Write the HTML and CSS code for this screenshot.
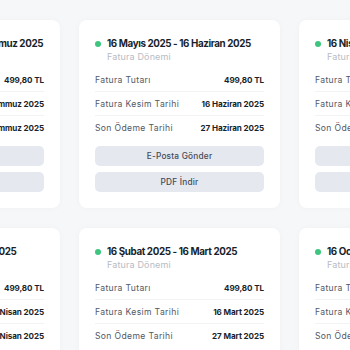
FILE: index.html
```html
<!DOCTYPE html>
<html lang="tr">
<head>
<meta charset="utf-8">
<link rel="stylesheet" href="styles.css">
</head>
<body>
<div class="grid">
  <div class="card">
    <div class="head"><span class="dot"></span><div><div class="title">16 Haziran 2025 - 16 Temmuz 2025</div><div class="sub">Fatura Dönemi</div></div></div>
    <div class="rows">
      <div class="row"><span class="lbl">Fatura Tutarı</span><span class="val">499,80 TL</span></div>
      <div class="row"><span class="lbl">Fatura Kesim Tarihi</span><span class="val">16 Temmuz 2025</span></div>
      <div class="row"><span class="lbl">Son Ödeme Tarihi</span><span class="val">27 Temmuz 2025</span></div>
    </div>
    <div class="btns"><button class="btn">E-Posta Gönder</button><button class="btn">PDF İndir</button></div>
  </div>
  <div class="card">
    <div class="head"><span class="dot"></span><div><div class="title">16 Mayıs 2025 - 16 Haziran 2025</div><div class="sub">Fatura Dönemi</div></div></div>
    <div class="rows">
      <div class="row"><span class="lbl">Fatura Tutarı</span><span class="val">499,80 TL</span></div>
      <div class="row"><span class="lbl">Fatura Kesim Tarihi</span><span class="val">16 Haziran 2025</span></div>
      <div class="row"><span class="lbl">Son Ödeme Tarihi</span><span class="val">27 Haziran 2025</span></div>
    </div>
    <div class="btns"><button class="btn">E-Posta Gönder</button><button class="btn">PDF İndir</button></div>
  </div>
  <div class="card">
    <div class="head"><span class="dot"></span><div><div class="title">16 Nisan 2025 - 16 Mayıs 2025</div><div class="sub">Fatura Dönemi</div></div></div>
    <div class="rows">
      <div class="row"><span class="lbl">Fatura Tutarı</span><span class="val">499,80 TL</span></div>
      <div class="row"><span class="lbl">Fatura Kesim Tarihi</span><span class="val">16 Mayıs 2025</span></div>
      <div class="row"><span class="lbl">Son Ödeme Tarihi</span><span class="val">27 Mayıs 2025</span></div>
    </div>
    <div class="btns"><button class="btn">E-Posta Gönder</button><button class="btn">PDF İndir</button></div>
  </div>
  <div class="card">
    <div class="head"><span class="dot"></span><div><div class="title">16 Mart 2025 - 16 Nisan 2025</div><div class="sub">Fatura Dönemi</div></div></div>
    <div class="rows">
      <div class="row"><span class="lbl">Fatura Tutarı</span><span class="val">499,80 TL</span></div>
      <div class="row"><span class="lbl">Fatura Kesim Tarihi</span><span class="val">16 Nisan 2025</span></div>
      <div class="row"><span class="lbl">Son Ödeme Tarihi</span><span class="val">27 Nisan 2025</span></div>
    </div>
    <div class="btns"><button class="btn">E-Posta Gönder</button><button class="btn">PDF İndir</button></div>
  </div>
  <div class="card">
    <div class="head"><span class="dot"></span><div><div class="title">16 Şubat 2025 - 16 Mart 2025</div><div class="sub">Fatura Dönemi</div></div></div>
    <div class="rows">
      <div class="row"><span class="lbl">Fatura Tutarı</span><span class="val">499,80 TL</span></div>
      <div class="row"><span class="lbl">Fatura Kesim Tarihi</span><span class="val">16 Mart 2025</span></div>
      <div class="row"><span class="lbl">Son Ödeme Tarihi</span><span class="val">27 Mart 2025</span></div>
    </div>
    <div class="btns"><button class="btn">E-Posta Gönder</button><button class="btn">PDF İndir</button></div>
  </div>
  <div class="card">
    <div class="head"><span class="dot"></span><div><div class="title">16 Ocak 2025 - 16 Şubat 2025</div><div class="sub">Fatura Dönemi</div></div></div>
    <div class="rows">
      <div class="row"><span class="lbl">Fatura Tutarı</span><span class="val">499,80 TL</span></div>
      <div class="row"><span class="lbl">Fatura Kesim Tarihi</span><span class="val">16 Şubat 2025</span></div>
      <div class="row"><span class="lbl">Son Ödeme Tarihi</span><span class="val">27 Şubat 2025</span></div>
    </div>
    <div class="btns"><button class="btn">E-Posta Gönder</button><button class="btn">PDF İndir</button></div>
  </div>
</div>
</body>
</html>
```
FILE: styles.css
```css
html, body {
  margin: 0;
  padding: 0;
  background: #f6f7f9;
  overflow: hidden;
}
body {
  font-family: "Inter", "Noto Sans", sans-serif;
  color: #1f2330;
}
.grid {
  display: grid;
  grid-template-columns: repeat(3, 201px);
  gap: 20px 19px;
  margin-left: -141px;
  padding-top: 20px;
}
.card {
  background: #ffffff;
  border-radius: 8px;
  height: 188px;
  box-sizing: border-box;
  padding: 16px 16px;
  display: flex;
  flex-direction: column;
  box-shadow: 0 0 6px rgba(30, 40, 60, 0.03);
}
.head {
  display: flex;
  align-items: flex-start;
  gap: 6px;
}
.dot {
  width: 6px;
  height: 6px;
  border-radius: 50%;
  background: #3ec57f;
  margin-top: 5px;
  flex: none;
}
.title {
  font-size: 9.8px;
  font-weight: 700;
  letter-spacing: -0.38px;
  line-height: 15px;
  color: #1a1f2c;
  white-space: nowrap;
}
.sub {
  font-size: 9px;
  letter-spacing: 0.15px;
  line-height: 11px;
  color: #b8bbc3;
}
.rows {
  margin-top: 6px;
}
.row {
  display: flex;
  justify-content: space-between;
  align-items: center;
  height: 24px;
  border-bottom: 1px solid #f2f3f5;
  box-sizing: border-box;
}
.row:last-child {
  border-bottom: none;
}
.lbl {
  font-size: 8.6px;
  letter-spacing: 0.35px;
  color: #525765;
}
.val {
  font-size: 8.1px;
  font-weight: 700;
  letter-spacing: -0.1px;
  color: #1a1f2c;
}
.btns {
  margin-top: 6px;
  display: flex;
  flex-direction: column;
  gap: 6px;
}
.btn {
  font-family: inherit;
  height: 20px;
  border: none;
  border-radius: 5px;
  background: #e6e8ef;
  color: #454a57;
  font-size: 8.3px;
  letter-spacing: 0.2px;
  font-weight: 500;
  padding: 0;
}
```
